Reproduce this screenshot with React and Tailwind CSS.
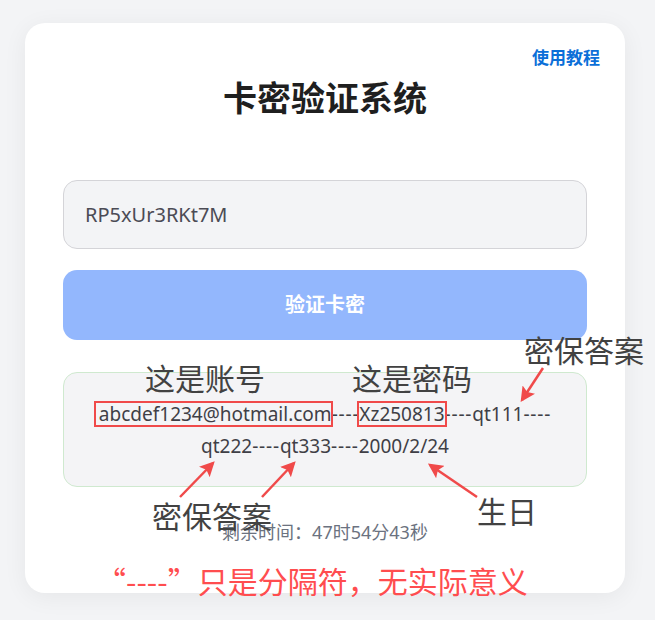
import React from "react";

const ff = { fontFamily: '"Noto Sans", "Noto Sans CJK SC", sans-serif' };
const cjk = { fontFamily: '"Noto Sans CJK SC", sans-serif' };

function Arrows() {
  const lines = [
    [543, 368, 522, 400],
    [180, 497, 213, 463],
    [262, 497, 294, 463],
    [477, 497, 430, 465],
  ];
  return (
    <svg className="absolute left-0 top-0 pointer-events-none" width="655" height="620" viewBox="0 0 655 620">
      <defs>
        <marker id="ah" markerWidth="6" markerHeight="6" refX="5" refY="3" orient="auto" markerUnits="strokeWidth">
          <path d="M0,0 L6,3 L0,6 L1.2,3 Z" fill="#f04a4a" />
        </marker>
      </defs>
      {lines.map(([x1, y1, x2, y2], i) => (
        <line key={i} x1={x1} y1={y1} x2={x2} y2={y2} stroke="#f04a4a" strokeWidth="2.5" markerEnd="url(#ah)" />
      ))}
    </svg>
  );
}

function Note({ className, children }) {
  return (
    <div className={"absolute text-[30px] leading-[30px] " + className} style={cjk}>
      {children}
    </div>
  );
}

function D() {
  return <span className="tracking-[0.8px]">----</span>;
}

export default function App() {
  return (
    <div className="relative min-h-[620px] w-[655px] overflow-hidden bg-[#f3f4f6]" style={ff}>
      <div className="pt-[23px] pl-[25px]">
        <div className="w-[600px] rounded-[20px] bg-white px-[38px] pt-[49px] pb-[49px] shadow-[0_4px_24px_rgba(0,0,0,0.06)]">
          <div className="-mt-[26px] -mr-[13px] flex justify-end">
            <a className="text-[17px] font-bold leading-[24px] text-[#0b6fd8]">使用教程</a>
          </div>
          <h1 className="mt-[8px] text-center text-[34px] font-bold leading-[40px] text-[#1f1f1f]">卡密验证系统</h1>
          <div className="mt-[62px] flex h-[69px] items-center rounded-[14px] border border-[#d4d4d8] bg-[#f3f4f6] pl-[21px] text-[20px] text-[#4b4b55]">
            RP5xUr3RKt7M
          </div>
          <div className="mt-[21px] flex h-[70px] items-center justify-center rounded-[14px] bg-[#93b7fd] text-[20px] font-bold text-white">
            验证卡密
          </div>
          <div className="mt-[32px] flex h-[115px] flex-col items-center justify-center rounded-[14px] border border-[#cfe9cf] bg-[#f4f4f6] text-center text-[19px] leading-[32px] text-[#3f3f46]">
            <div>
              <span className="relative">
                abcdef1234@hotmail.com
                <span className="absolute -left-[5px] -right-[1px] top-0 bottom-0 border-2 border-[#f04a4a]" />
              </span>
              <D />
              <span className="relative">
                Xz250813
                <span className="absolute -left-[2px] -right-[2px] top-0 bottom-0 border-2 border-[#f04a4a]" />
              </span>
              <D />qt111<D />
            </div>
            <div>
              qt222<D />qt333<D />2000/2/24
            </div>
          </div>
          <div className="mt-[33px] text-center text-[18px] leading-[24px] text-[#6b7280]">剩余时间：47时54分43秒</div>
        </div>
      </div>

      <Arrows />

      <Note className="left-[145px] top-[362px] text-[#424242]">这是账号</Note>
      <Note className="left-[352px] top-[362px] text-[#424242]">这是密码</Note>
      <Note className="left-[524px] top-[334px] text-[#424242]">密保答案</Note>
      <Note className="left-[152px] top-[500px] text-[#424242]">密保答案</Note>
      <Note className="left-[477px] top-[495px] text-[#424242]">生日</Note>
      <Note className="left-[96px] top-[565px] text-[#ff4d4f]">“----”只是分隔符，无实际意义</Note>
    </div>
  );
}
